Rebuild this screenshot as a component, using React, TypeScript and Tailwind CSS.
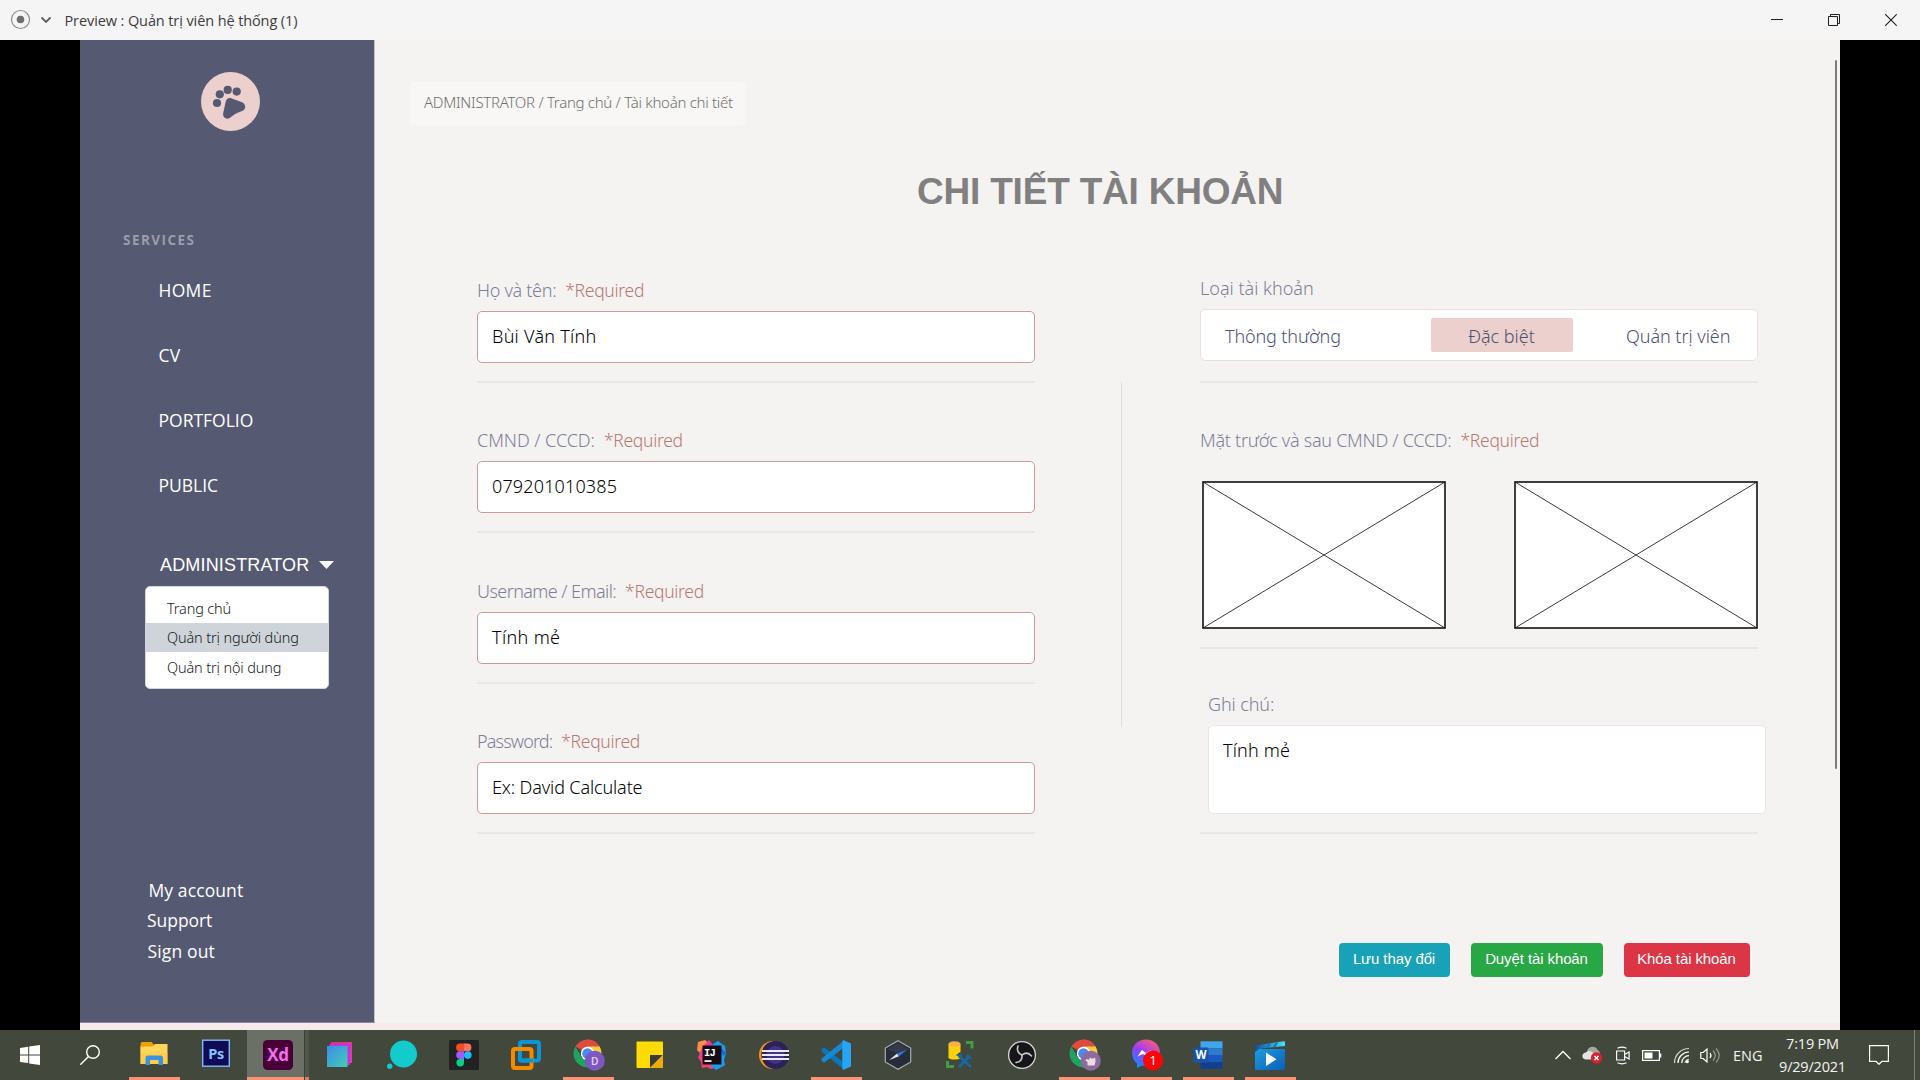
import React from "react";

const noto = "font-['Noto_Sans','Open_Sans',sans-serif]";
const openSans = "font-['Open_Sans','Noto_Sans',sans-serif]";
const arial = "font-['Liberation_Sans',Arial,sans-serif]";

function TitleBar() {
  return (
    <header className="flex h-10 items-center bg-[#f5f5f5]">
      <svg className="ml-[10px] -mt-px" width="21" height="21" viewBox="0 0 21 21">
        <circle cx="10.5" cy="10.5" r="9" fill="none" stroke="#8c8c8c" strokeWidth="1.2" />
        <circle cx="10.5" cy="10.5" r="3.8" fill="#6e6e6e" />
      </svg>
      <svg className="ml-[9px]" width="12" height="8" viewBox="0 0 12 8" fill="none" stroke="#5e5e5e" strokeWidth="1.8">
        <path d="M1.5 1.5 6 6l4.500-4.500" />
      </svg>
      <span className={`ml-[12.500px] pt-px text-[14.500px] leading-6 tracking-[-0.1px] text-[#3c3c3c] whitespace-nowrap ${openSans}`}>
        Preview : Quản trị viên hệ thống (1)
      </span>
      <div className="ml-auto mr-[23px] flex items-center gap-[45px]">
        <svg width="12" height="12" viewBox="0 0 12 12" stroke="#1e1e1e"><path d="M0 5.500h12" /></svg>
        <svg width="12" height="12" viewBox="0 0 12 12" fill="none" stroke="#1e1e1e">
          <path d="M.5 2.500h9v9h-9zM2.500 2.500v-2h9v9h-2" />
        </svg>
        <svg width="12" height="12" viewBox="0 0 12 12" stroke="#1e1e1e" strokeWidth="1.1"><path d="m.3.3 11.400 11.400M11.700.3.3 11.700" /></svg>
      </div>
    </header>
  );
}

function Logo() {
  return (
    <svg className="ml-[121px] mt-8 block shrink-0" width="59" height="59" viewBox="0 0 59 59">
      <circle cx="29.500" cy="29.500" r="29.500" fill="#ecd0cd" />
      <g fill="#555972">
        <circle cx="16" cy="31" r="4.100" />
        <circle cx="18.800" cy="22.300" r="4.100" />
        <circle cx="26.700" cy="17.900" r="4.100" />
        <circle cx="35.700" cy="19.600" r="4.100" />
        <path d="M24.500 30.500C25 27 27.500 25 30.800 26.500L41 30.200C45.200 32 45.300 37.500 41.200 39C35.500 41 33.500 42.300 29.800 45.300C26.300 48.200 21.800 46.200 22.100 41.800Z" />
      </g>
    </svg>
  );
}

function Sidebar() {
  return (
    <aside className="flex h-[983px] w-[295px] shrink-0 flex-col border-r border-b border-[#c3c2cb] border-b-[#8a8b9c] bg-[#555972]">
      <Logo />
      <h2 className={`ml-[43px] mt-[99px] text-[13.500px] font-bold leading-5 tracking-[1.450px] text-[#9b9dac] ${openSans}`}>SERVICES</h2>
      <nav className={`ml-[78.500px] mt-[27px] flex flex-col gap-[39px] text-[17.500px] leading-[26px] text-white ${openSans}`}>
        <a className="tracking-[0.3px]">HOME</a>
        <a className="tracking-[0.3px]">CV</a>
        <a>PORTFOLIO</a>
        <a>PUBLIC</a>
      </nav>
      <div className={`ml-[80px] mt-[55px] flex items-center text-[18px] leading-6 tracking-[0.160px] text-white ${arial}`}>
        ADMINISTRATOR
        <svg className="ml-[10px]" width="15" height="8" viewBox="0 0 15 8"><path d="M0 0h15L7.500 8z" fill="#fff" /></svg>
      </div>
      <ul className={`ml-[65px] mt-[9px] h-[103px] w-[184px] rounded-[5px] border border-[#d5d6dd] bg-white pt-[7px] text-[14.500px] font-[340] leading-[29px] tracking-[-0.150px] text-[#16191c] ${noto}`}>
        <li className="pl-[21px]">Trang chủ</li>
        <li className="bg-[#ced4da] pl-[21px]">Quản trị người dùng</li>
        <li className="mt-px pl-[21px]">Quản trị nội dung</li>
      </ul>
      <div className={`ml-[67px] mt-[186px] flex flex-col text-[17.500px] leading-[30.400px] text-white ${openSans}`}>
        <a className="pl-[1.500px] tracking-[0.100px]">My account</a>
        <a className="tracking-[-0.050px]">Support</a>
        <a className="pl-[0.500px] tracking-[0.150px]">Sign out</a>
      </div>
    </aside>
  );
}

function Required() {
  return <span className="ml-[9px] text-[17.500px] font-[350] tracking-[-0.300px] text-[#bb7674]">*Required</span>;
}

function Divider({ className = "" }: { className?: string }) {
  return <div className={`h-[2px] w-[558px] shrink-0 bg-[#ece6e5] ${className}`} />;
}

const labelBase = `flex h-6 shrink-0 items-baseline whitespace-nowrap text-[18px] font-light leading-6 text-[#7d7f98] ${noto}`;

function Field({ label, value, labelClass, valueClass }: { label: string; value: string; labelClass: string; valueClass: string }) {
  return (
    <div className="h-[150.300px]">
      <label className={labelBase}>
        <span className={labelClass}>{label}</span>
        <Required />
      </label>
      <div className={`mt-[9px] flex h-[52px] w-[558px] items-center rounded-[5px] border border-[#cd9a99] bg-white pb-px pl-[14px] text-[18px] font-[340] text-black ${noto} ${valueClass}`}>
        {value}
      </div>
      <Divider className="mt-[18px]" />
    </div>
  );
}

function Placeholder() {
  return (
    <svg className="block" width="244" height="148" viewBox="0 0 244 148">
      <rect x="1" y="1" width="242" height="146" fill="#fff" stroke="#000" strokeWidth="1.500" />
      <path d="M1 1l242 146M243 1 1 147" stroke="#222" strokeWidth=".9" />
    </svg>
  );
}

function Main() {
  return (
    <main className="flex min-w-0 flex-1 flex-col bg-[#f5f3f2]">
      <div className={`ml-[35px] mt-[42px] flex h-[43px] w-[336px] shrink-0 items-center whitespace-nowrap rounded-[4px] bg-[#f8f7f5] pb-[2px] pl-[14px] text-[15px] font-[330] tracking-[-0.290px] text-[#6f6f6f] ${noto}`}>
        ADMINISTRATOR / Trang chủ / Tài khoản chi tiết
      </div>
      <h1 className={`ml-[542px] mt-[43px] whitespace-nowrap text-[37px] font-bold leading-[48px] tracking-[-0.200px] text-[#808080] ${arial}`}>CHI TIẾT TÀI KHOẢN</h1>
      <div className="-mt-px ml-[102px] flex">
        <section className="w-[558px] pt-[63px]">
          <Field label="Họ và tên:" value="Bùi Văn Tính" labelClass="tracking-[-0.300px]" valueClass="tracking-[0.260px]" />
          <Field label="CMND / CCCD:" value="079201010385" labelClass="tracking-[-0.050px]" valueClass="tracking-[0.150px]" />
          <Field label="Username / Email:" value="Tính mẻ" labelClass="tracking-[-0.580px]" valueClass="tracking-[0.350px]" />
          <Field label="Password:" value="Ex: David Calculate" labelClass="tracking-[-0.850px]" valueClass="tracking-[-0.130px]" />
        </section>
        <div className="ml-[86px] mt-[167px] h-[345px] w-px bg-[#dedede]" />
        <section className="ml-[78px] flex w-[566px] flex-col pt-[61px]">
          <label className={labelBase}>Loại tài khoản</label>
          <div className={`mt-[9px] flex h-[52px] w-[558px] items-center rounded-[5px] border border-[#eddfde] bg-white text-[18px] font-light text-[#4e5270] ${noto}`}>
            <span className="ml-[24px] w-[206px] pt-[2px] tracking-[-0.130px]">Thông thường</span>
            <span className="flex h-[34px] w-[142px] items-center justify-center rounded-[2px] bg-[#ecd0cd] pr-px pt-[2px]">Đặc biệt</span>
            <span className="ml-[53px] pt-[2px] tracking-[-0.050px]">Quản trị viên</span>
          </div>
          <Divider className="mt-5" />
          <label className={`mt-[45px] ${labelBase}`}>
            <span className="tracking-[-0.270px]">Mặt trước và sau CMND / CCCD:</span>
            <Required />
          </label>
          <div className="ml-[1.500px] mt-[29px] flex gap-[68px]">
            <Placeholder />
            <Placeholder />
          </div>
          <Divider className="mt-[18px]" />
          <label className={`ml-2 mt-[43px] ${labelBase}`}>
            <span className="tracking-[-0.100px]">Ghi chú:</span>
          </label>
          <div className={`ml-2 mt-[9px] h-[89px] w-[558px] rounded-[5px] border border-[#ebe5e4] bg-white pl-[14px] pt-3 text-[18px] font-[340] leading-6 tracking-[0.150px] text-black ${noto}`}>
            Tính mẻ
          </div>
          <Divider className="mt-[18px]" />
          <div className={`ml-[138.500px] mt-[109px] flex gap-[21px] text-[15px] tracking-[-0.100px] text-white ${arial}`}>
            <button className="h-[34px] w-[111px] rounded-[4px] bg-[#17a2b8] pb-px">Lưu thay đổi</button>
            <button className="h-[34px] w-[132px] rounded-[4px] bg-[#28a745] pb-px">Duyệt tài khoản</button>
            <button className="h-[34px] w-[126px] rounded-[4px] bg-[#dc3545] pb-px">Khóa tài khoản</button>
          </div>
        </section>
      </div>
    </main>
  );
}

const FolderIcon = () => (
  <svg width="32" height="32" viewBox="0 0 32 32">
    <path d="M2.500 5c0-1 .7-2 1.700-2h9.300l2.500 2.500V14H2.500z" fill="#e8a200" />
    <path d="M2.500 7.500h12L17 5h12.500v20h-27z" fill="#ffd45a" />
    <path d="M2.500 14h27v11h-27z" fill="#fcc93e" opacity=".6" />
    <path d="M7.500 26v-7c0-1.500 1-2.500 2.500-2.500h12.500c1.500 0 2.500 1 2.500 2.500v7h-4.500v-5h-8.500v5z" fill="#3c92dd" />
  </svg>
);

const PsIcon = () => (
  <svg width="32" height="32" viewBox="0 0 32 32">
    <rect x="2.700" y="1.200" width="26.600" height="26" fill="#100b54" stroke="#80baf2" strokeWidth="1.400" />
    <text x="16" y="19.500" textAnchor="middle" fill="#80c4fa" fontFamily="Open Sans" fontWeight="700" fontSize="14.500" letterSpacing="-.4">Ps</text>
  </svg>
);

const XdIcon = () => (
  <svg width="32" height="32" viewBox="0 0 32 32">
    <rect x="1" y="1" width="30" height="30" rx="4.500" fill="#470137" />
    <text x="16" y="22" textAnchor="middle" fill="#f56df0" fontFamily="Open Sans" fontWeight="700" fontSize="17" letterSpacing="-.3">Xd</text>
  </svg>
);

const StackIcon = () => (
  <svg width="32" height="32" viewBox="0 0 32 32">
    <defs>
      <linearGradient id="stack" x1="0" y1="0" x2="1" y2="1"><stop offset="0" stopColor="#3d8bea" /><stop offset="1" stopColor="#41cfb4" /></linearGradient>
      <linearGradient id="stackB" x1="0" y1="0" x2="1" y2="1"><stop offset="0" stopColor="#c93c74" /><stop offset="1" stopColor="#ee39a8" /></linearGradient>
    </defs>
    <path d="M7 3h21v21H7z" fill="url(#stackB)" />
    <path d="M5.500 5H26v21H5.500z" fill="#c334e0" />
    <path d="M3 7h20.500v21H3z" fill="url(#stack)" />
  </svg>
);

const BubbleIcon = () => (
  <svg width="32" height="32" viewBox="0 0 32 32" fill="#14cbcb">
    <circle cx="17.500" cy="15" r="13.500" />
    <circle cx="3.700" cy="27.200" r="2.700" />
  </svg>
);

const FigmaIcon = () => (
  <svg width="32" height="32" viewBox="0 0 32 32">
    <rect x="1" y="1" width="30" height="30" rx="1.500" fill="#222" />
    <path d="M16 4.500h-4a3.900 3.900 0 0 0 0 7.800h4z" fill="#f24e1e" />
    <path d="M16 4.500h3.500a3.900 3.900 0 0 1 0 7.800H16z" fill="#ff7262" />
    <path d="M16 12.300h-4a3.800 3.800 0 0 0 0 7.600h4z" fill="#a259ff" />
    <circle cx="19.800" cy="16.100" r="3.800" fill="#1abcfe" />
    <path d="M16 19.900h-4a3.800 3.800 0 1 0 4 3.800z" fill="#0acf83" />
  </svg>
);

const VmwareIcon = () => (
  <svg width="32" height="32" viewBox="0 0 32 32" fill="none" strokeWidth="4">
    <rect x="10" y="3" width="19" height="18.500" rx="2" stroke="#0c96d4" />
    <rect x="3" y="10" width="18.500" height="19" rx="2" stroke="#f38b00" />
    <path d="M10 12v8q0 1.500 1.500 1.500H23" stroke="#0c96d4" />
  </svg>
);

function ChromeIcon({ badge }: { badge: "letter" | "cat" }) {
  return (
    <svg className="ml-[2px]" width="34" height="34" viewBox="0 0 34 34">
      <path d="M15.500 15.500 3.380 8.500A14 14 0 0 1 27.620 8.500Z" fill="#dd4b3e" />
      <path d="M15.500 1.500A14 14 0 0 1 27.620 8.500L15.500 8.500Z" fill="#dd4b3e" />
      <path d="M15.500 8.500H27.620A14 14 0 0 1 15.500 29.500L21.560 19Z" fill="#fdcd40" />
      <path d="M3.380 8.500A14 14 0 0 0 15.500 29.500L21.560 19L15.500 21.500L9.440 19Z" fill="#1ea361" />
      <circle cx="15.500" cy="15.500" r="6.700" fill="#fff" />
      <circle cx="15.500" cy="15.500" r="5.200" fill="#4a89f3" />
      <circle cx="22.800" cy="22.800" r="10" fill={badge === "letter" ? "#7e57c2" : "#8e6a9e"} />
      {badge === "letter" ? (
        <text x="22.800" y="27" textAnchor="middle" fill="#ddd2f0" fontFamily="Roboto" fontWeight="500" fontSize="11.500">D</text>
      ) : (
        <path d="M19.500 27.500v-3.500l-2-1.500.8-1.500 2.700.8 1-2.300 1.500 1h2l1.500-1 .6 3.500-1 4.500z" fill="#eadfe0" />
      )}
    </svg>
  );
}

const NotesIcon = () => (
  <svg width="32" height="32" viewBox="0 0 32 32">
    <rect x="2.500" y="2.500" width="26.500" height="26.500" rx=".8" fill="#ffdb05" />
    <path d="M16 29V16h13z" fill="#3b3b38" />
    <path d="M16 29 29 16v13z" fill="#edaa0b" />
  </svg>
);

const IntellijIcon = () => (
  <svg width="32" height="32" viewBox="0 0 32 32">
    <path d="M2 3 9 1l8 6-4 14-10-2 1-5-3-3z" fill="#fe8b4a" />
    <path d="M6 9 13 1l5 6-3 14-13-2z" fill="#f0389c" />
    <path d="M2 18h16l4 10-7 2-4-2-5 1-1-6z" fill="#fc3f72" />
    <path d="M17 5 22 2l7 5 1 7-2 7 1 5-5 3-4 2-5-4z" fill="#1c9bf4" />
    <path d="m24 8 6 6-3 3z" fill="#0b6ce0" />
    <rect x="6.500" y="6.500" width="19" height="19" fill="#160d12" />
    <text x="8" y="16.500" fill="#fff" fontFamily="Liberation Mono" fontWeight="700" fontSize="10.500" letterSpacing="-.8">IJ</text>
    <path d="M8.500 21.200h7v1.700h-7z" fill="#fff" />
  </svg>
);

const EclipseIcon = () => (
  <svg width="32" height="32" viewBox="0 0 32 32">
    <path d="M15 2A14 14 0 0 0 15 30z" fill="#f7941e" />
    <circle cx="17.300" cy="16" r="14" fill="#2c2255" />
    <circle cx="17.300" cy="16" r="9" fill="#43318c" />
    <path d="M4 12h27M4 16h27M4 20h27" stroke="#eceaf3" strokeWidth="2" />
  </svg>
);

const VscodeIcon = () => (
  <svg width="32" height="32" viewBox="0 0 32 32">
    <path d="M1.500 10.500 4 8.300 24 23.500v7L1.500 12.500z" fill="#0a76bd" />
    <path d="M1.500 21.500 4 23.700 24 8.500v-7L1.500 19.500z" fill="#1689d2" />
    <path d="M23.300 1 31 4.500v23L23.300 31l-1-1.500V2.500z" fill="#27a4f2" />
  </svg>
);

const CompassIcon = () => (
  <svg width="32" height="32" viewBox="0 0 32 32">
    <path d="M16 1.700 28.700 9v14L16 30.300 3.300 23V9z" fill="#272c39" stroke="#a9abb1" strokeWidth="1.200" />
    <path d="M16 4 27 10.500 16 14 5 10.500z" fill="#343a48" />
    <path d="M7 21.300 15 14.500l2 2.800z" fill="#dce3ea" />
    <path d="M25 10.800 15 14.500l2 2.800z" fill="#2a7be8" />
  </svg>
);

const DatabaseIcon = () => (
  <svg width="32" height="32" viewBox="0 0 32 32">
    <path d="M4.500 5v14c2 2 10 2 12 0V5z" fill="#fdd20d" />
    <ellipse cx="10.500" cy="5" rx="6" ry="2.800" fill="#f3b14e" />
    <path d="M22 3.500h6v6M3.500 22v5.500H10" fill="none" stroke="#439b45" strokeWidth="3" />
    <path d="m12 16 4.500-3 1 6.500z" fill="#333" />
    <path d="m15 28 11-11M15 17l12 11" stroke="#1668a8" strokeWidth="2.600" />
    <path d="M23.500 15.500v3.500h4M13 16h4v3.500" fill="none" stroke="#1668a8" strokeWidth="2" />
  </svg>
);

const ObsIcon = () => (
  <svg width="32" height="32" viewBox="0 0 32 32">
    <circle cx="16" cy="16" r="13.400" fill="#161618" stroke="#d8d8d8" strokeWidth="1.300" />
    <g fill="none" stroke="#c8c8ca" strokeWidth="1.600" strokeLinecap="round">
      <path d="M16 16C12.500 14.500 10.500 11.500 12 7" />
      <path d="M16 16c3-2.400 6.600-2.600 9.500 1" />
      <path d="M16 16c.4 3.800-1.400 7-6 7.500" />
    </g>
  </svg>
);

const MessengerIcon = () => (
  <svg className="ml-[2px]" width="34" height="34" viewBox="0 0 34 34">
    <defs>
      <linearGradient id="msg" x1=".2" y1="1" x2=".8" y2="0"><stop offset="0" stopColor="#0a90ff" /><stop offset=".5" stopColor="#9a3cf7" /><stop offset="1" stopColor="#ff5f70" /></linearGradient>
    </defs>
    <path d="M16 1.500c8 0 14 5.800 14 13.300S24 28 16 28c-1.500 0-2.500-.2-4-.6L7 30v-4.500c-3-2.500-5-6-5-10.700C2 7.300 8 1.500 16 1.500z" fill="url(#msg)" />
    <path d="m7.500 18.500 4.500-6.500 4 3 5-3-4 7-4-3z" fill="#fff" />
    <circle cx="23" cy="22.500" r="10" fill="#fb0505" />
    <text x="23" y="27" textAnchor="middle" fill="#fff" fontFamily="Open Sans" fontSize="13.500">1</text>
  </svg>
);

const WordIcon = () => (
  <svg width="32" height="32" viewBox="0 0 32 32">
    <path d="M8.500 2.300h22v7h-22z" fill="#41a5ee" />
    <path d="M8.500 9.300h22v7h-22z" fill="#2b7cd3" />
    <path d="M8.500 16.300h22v7h-22z" fill="#185abd" />
    <path d="M8.500 23.300h22v6.400h-22z" fill="#103f91" />
    <rect x="1.500" y="8.500" width="15" height="15" rx="1" fill="#1853ae" />
    <text x="9" y="20" textAnchor="middle" fill="#fff" fontFamily="Open Sans" fontWeight="700" fontSize="11.500">W</text>
  </svg>
);

const MoviesIcon = () => (
  <svg width="32" height="32" viewBox="0 0 32 32">
    <defs>
      <linearGradient id="film" x1="0" y1="0" x2="1" y2="1"><stop offset="0" stopColor="#1e9be0" /><stop offset="1" stopColor="#0a5fb8" /></linearGradient>
      <linearGradient id="clap" x1="0" y1="0" x2="1" y2="0"><stop offset="0" stopColor="#0d4f97" /><stop offset="1" stopColor="#4fe0fb" /></linearGradient>
    </defs>
    <path d="M1 6.500 29.500 2.200q1.500-.2 1.500 1.300V7L5 9.500V13H1z" fill="url(#clap)" />
    <path d="m9 5.500-3 6M16 4.500l-3 4.500M23 3.500l-3 4.500" stroke="#0e76c0" strokeWidth="2" />
    <path d="M1 13 5 10h26v19.500q0 1.500-1.500 1.500h-27Q1 31 1 29.500z" fill="url(#film)" />
    <path d="M12 13.500v13.500l10.500-6.700z" fill="#f5f5f5" />
  </svg>
);

const apps: { icon: React.ReactNode; state?: "open" | "active" }[] = [
  { icon: <FolderIcon />, state: "open" },
  { icon: <PsIcon /> },
  { icon: <XdIcon />, state: "active" },
  { icon: <StackIcon /> },
  { icon: <BubbleIcon /> },
  { icon: <FigmaIcon /> },
  { icon: <VmwareIcon /> },
  { icon: <ChromeIcon badge="letter" />, state: "open" },
  { icon: <NotesIcon /> },
  { icon: <IntellijIcon /> },
  { icon: <EclipseIcon /> },
  { icon: <VscodeIcon />, state: "open" },
  { icon: <CompassIcon /> },
  { icon: <DatabaseIcon /> },
  { icon: <ObsIcon /> },
  { icon: <ChromeIcon badge="cat" />, state: "open" },
  { icon: <MessengerIcon />, state: "open" },
  { icon: <WordIcon />, state: "open" },
  { icon: <MoviesIcon />, state: "open" },
];

function Tray() {
  return (
    <div className="ml-auto flex items-center">
      <svg width="16" height="10" viewBox="0 0 16 10" fill="none" stroke="#fff" strokeWidth="1.300"><path d="M.5 9 8 1.500 15.500 9" /></svg>
      <svg className="ml-[11px]" width="21" height="18" viewBox="0 0 21 18">
        <path d="M5 5.500C6-.5 14-.5 15.500 4c3 .5 3 6 0 6.500L4 9z" fill="#a5a8a1" />
        <path d="M3.500 13.500C-1 13-.5 6.500 4 6.500c3-3 7-1 7.500 2 3 0 3.500 5 0 5z" fill="#e4e4e2" />
        <circle cx="14.500" cy="12" r="5.700" fill="#d8232f" />
        <path d="m12.500 10 4 4M16.500 10l-4 4" stroke="#fff" strokeWidth="1.500" />
      </svg>
      <svg className="ml-[12px]" width="16" height="19" viewBox="0 0 16 19" fill="none" stroke="#fff" strokeWidth="1.200">
        <path d="M1.600 5h8v9h-8zM9.600 8.500l4.500-2.500v7l-4.500-2.500M2.500 2.200Q7 .2 11.500 2.200M2.500 16.800q4.500 2 9 0" />
      </svg>
      <svg className="ml-[11px]" width="20" height="11" viewBox="0 0 20 11">
        <rect x=".6" y=".6" width="16.800" height="9.800" fill="none" stroke="#fff" strokeWidth="1.200" />
        <path d="M2.500 2.500h8v6h-8zM18 3.500h1.300v4H18z" fill="#fff" />
      </svg>
      <svg className="ml-[11px]" width="17" height="17" viewBox="0 0 17 17" fill="none" stroke="#fff" strokeWidth="1.200">
        <path d="M1.500 16C1.500 8 8 1.500 16 1.500" opacity=".75" />
        <path d="M5 16C5 10 10 5 16 5M8.700 16c0-4 3.300-7.300 7.300-7.300" />
        <path d="M12 16c0-2 2-3.700 4-3.700" opacity=".7" />
        <circle cx="14.300" cy="14.600" r="1.600" fill="#fff" stroke="none" />
      </svg>
      <svg className="ml-[10px]" width="21" height="17" viewBox="0 0 21 17" fill="none" stroke="#fff" strokeWidth="1.200">
        <path d="M.8 5.500h2.400L7 2v13l-3.800-3.500H.8zM10 6q2 2.500 0 5" />
        <path d="M13 3.500q4.500 5 0 10M16 1.500q6.500 7 0 14" opacity=".45" />
      </svg>
      <span className="ml-[12px] w-[31px] pt-px text-[14.500px] leading-5">ENG</span>
      <div className="ml-[10px] flex w-[77px] flex-col items-center text-[14.500px] leading-[23px] tracking-[-0.200px]">
        <span>7:19 PM</span>
        <span>9/29/2021</span>
      </div>
      <svg className="ml-[18px]" width="20" height="20" viewBox="0 0 20 20" fill="none" stroke="#fff" strokeWidth="1.200">
        <path d="M.6.6h18.800v15.800h-6.400L10 19.300 7 16.400H.6z" />
      </svg>
      <div className="ml-[25px] mr-[5px] h-[50px] w-px bg-[#7e8379]" />
    </div>
  );
}

function Taskbar() {
  return (
    <footer className={`flex h-[50px] items-center bg-[#42483b] text-[#f4f4f2] ${openSans}`}>
      <svg className="ml-5" width="20" height="20" viewBox="0 0 20 20" fill="#fff">
        <path d="M0 2.900 8.200 1.700v7.700H0zM9.200 1.500 20 0v9.400H9.200zM0 10.400h8.200v7.700L0 16.900zM9.200 10.400H20V20L9.200 18.400z" />
      </svg>
      <svg className="ml-10" width="20" height="20" viewBox="0 0 20 20" fill="none" stroke="#fff" strokeWidth="1.400">
        <circle cx="13" cy="7" r="6.300" />
        <path d="M8.500 11.500.3 19.700" />
      </svg>
      <div className="ml-[23px] flex">
        {apps.map((app, i) => (
          <div key={i} className={app.state === "active" ? "flex h-[50px] w-[62px] bg-[#6a7065]" : "flex h-[50px] w-[62px]"}>
            <div className="flex min-w-0 flex-1 flex-col items-center">
              <div className="flex h-[47px] items-center pt-[3px]">{app.icon}</div>
              {app.state === "open" && <div className="h-[3px] w-[51px] bg-[#fb9272]" />}
              {app.state === "active" && <div className="h-[3px] w-full bg-[#fb9272]" />}
            </div>
            {app.state === "active" && (
              <div className="-ml-[5px] flex h-[50px] w-[5px] flex-col border-l border-[#3c4238] bg-[#50564b]">
                <div className="mt-auto h-[3px] bg-[#d57f65]" />
              </div>
            )}
          </div>
        ))}
      </div>
      <Tray />
    </footer>
  );
}

export default function App() {
  return (
    <div className="flex h-[1080px] w-[1920px] flex-col overflow-hidden bg-black">
      <TitleBar />
      <div className="flex h-[990px] justify-center bg-black">
        <div className="relative flex h-[990px] w-[1760px] flex-col bg-[#f7eaea]">
          <div className="flex h-[983px]">
            <Sidebar />
            <Main />
          </div>
          <div className="absolute right-[3px] top-5 h-[709px] w-[2px] rounded-full bg-[#7c7c7c]" />
        </div>
      </div>
      <Taskbar />
    </div>
  );
}
